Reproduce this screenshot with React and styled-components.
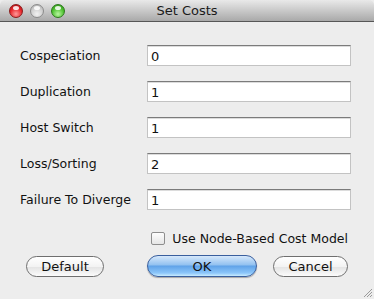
import React from 'react'
import styled, { createGlobalStyle } from 'styled-components'

const GlobalStyle = createGlobalStyle`
  html, body {
    margin: 0;
    padding: 0;
    background: #ededed;
  }
  * { box-sizing: border-box; }
`;

const Window = styled.div`
  width: 374px;
  height: 299px;
  display: flex;
  flex-direction: column;
  background: #ededed;
  font-family: "DejaVu Sans", "Liberation Sans", sans-serif;
  font-size: 12.5px;
  color: #111;
  position: relative;
  overflow: hidden;
`;

const TitleBar = styled.div`
  height: 22px;
  flex: none;
  display: flex;
  align-items: center;
  position: relative;
  background: linear-gradient(#e9e9e9, #c9c9c9 50%, #a9a9a9);
  border-bottom: 1px solid #575757;
  border-radius: 5px 5px 0 0;
`;

const Lights = styled.div`
  display: flex;
  gap: 7px;
  padding-left: 9px;
`;

const Light = styled.span`
  width: 14px;
  height: 14px;
  border-radius: 50%;
  border: 1px solid ${({ $edge }) => $edge};
  background: radial-gradient(circle at 50% 75%, ${({ $glow }) => $glow} 0%, ${({ $base }) => $base} 55%, ${({ $dark }) => $dark} 100%);
  position: relative;
  &::after {
    content: '';
    position: absolute;
    left: 3px;
    top: 1px;
    width: 6px;
    height: 4px;
    border-radius: 50%;
    background: rgba(255, 255, 255, 0.85);
  }
`;

const Title = styled.div`
  position: absolute;
  left: 0;
  right: 0;
  text-align: center;
  font-size: 13px;
  color: #1a1a1a;
  pointer-events: none;
`;

const Body = styled.div`
  flex: 1;
  display: flex;
  flex-direction: column;
  padding: 23px 23px 0 20px;
`;

const Rows = styled.div`
  display: flex;
  flex-direction: column;
  gap: 15px;
`;

const Row = styled.div`
  display: flex;
  align-items: center;
  height: 21px;
`;

const Label = styled.label`
  width: 127px;
  flex: none;
`;

const Field = styled.div`
  width: 204px;
  height: 21px;
  background: #fff;
  border: 1px solid #c3c3c3;
  border-top-color: #7b7b7b;
  box-shadow: inset 0 1px 0 #dcdcdc;
  padding: 2px 3px 0;
  font-size: 13px;
  line-height: 17px;
`;

const CheckRow = styled.div`
  display: flex;
  justify-content: flex-end;
  align-items: center;
  gap: 7px;
  margin-top: 21px;
  padding-right: 3px;
`;

const Box = styled.span`
  width: 14px;
  height: 13px;
  border: 1px solid #8e8e8e;
  border-radius: 2px;
  background: linear-gradient(#fdfdfd, #e6e6e6);
`;

const Buttons = styled.div`
  display: flex;
  align-items: center;
  margin-top: 9px;
  padding-left: 6px;
`;

const Button = styled.div`
  height: 21px;
  width: ${({ $w }) => $w}px;
  margin-left: ${({ $ml }) => $ml || 0}px;
  border-radius: 11px;
  display: flex;
  align-items: center;
  justify-content: center;
  font-size: 13px;
  border: 1px solid #6f6f6f;
  background: linear-gradient(#ffffff, #f3f3f3 50%, #e3e3e3 51%, #fbfbfb);
`;

const PrimaryButton = styled(Button)`
  height: 22px;
  border-color: #3a5f9e;
  background: linear-gradient(#d6e8fb, #92c1f0 45%, #5fa2e8 50%, #8cc6fa 85%, #c9ecff);
  box-shadow: 0 1px 1px rgba(0, 0, 0, 0.3);
`;

const Grip = styled.svg`
  position: absolute;
  right: 1px;
  bottom: 1px;
`;

export default function App() {
  const costs = [
    ['Cospeciation', '0'],
    ['Duplication', '1'],
    ['Host Switch', '1'],
    ['Loss/Sorting', '2'],
    ['Failure To Diverge', '1'],
  ];
  return (
    <>
      <GlobalStyle />
      <Window>
        <TitleBar>
          <Lights>
            <Light $edge="#8a1c1c" $base="#e8262b" $glow="#ff9a9a" $dark="#a30d12" />
            <Light $edge="#8c8c8c" $base="#cfcfcf" $glow="#f2f2f2" $dark="#a9a9a9" />
            <Light $edge="#2c7a1c" $base="#4fc231" $glow="#b8f5a0" $dark="#2d8a16" />
          </Lights>
          <Title>Set Costs</Title>
        </TitleBar>
        <Body>
          <Rows>
            {costs.map(([name, value]) => (
              <Row key={name}>
                <Label>{name}</Label>
                <Field>{value}</Field>
              </Row>
            ))}
          </Rows>
          <CheckRow>
            <Box />
            <span>Use Node-Based Cost Model</span>
          </CheckRow>
          <Buttons>
            <Button $w={78}>Default</Button>
            <PrimaryButton $w={110} $ml={43}>OK</PrimaryButton>
            <Button $w={75} $ml={16}>Cancel</Button>
          </Buttons>
        </Body>
        <Grip width="11" height="11" viewBox="0 0 11 11">
          <path d="M10 2 L2 10 M10 5 L5 10 M10 8 L8 10" stroke="#9a9a9a" strokeWidth="1" />
        </Grip>
      </Window>
    </>
  );
}
